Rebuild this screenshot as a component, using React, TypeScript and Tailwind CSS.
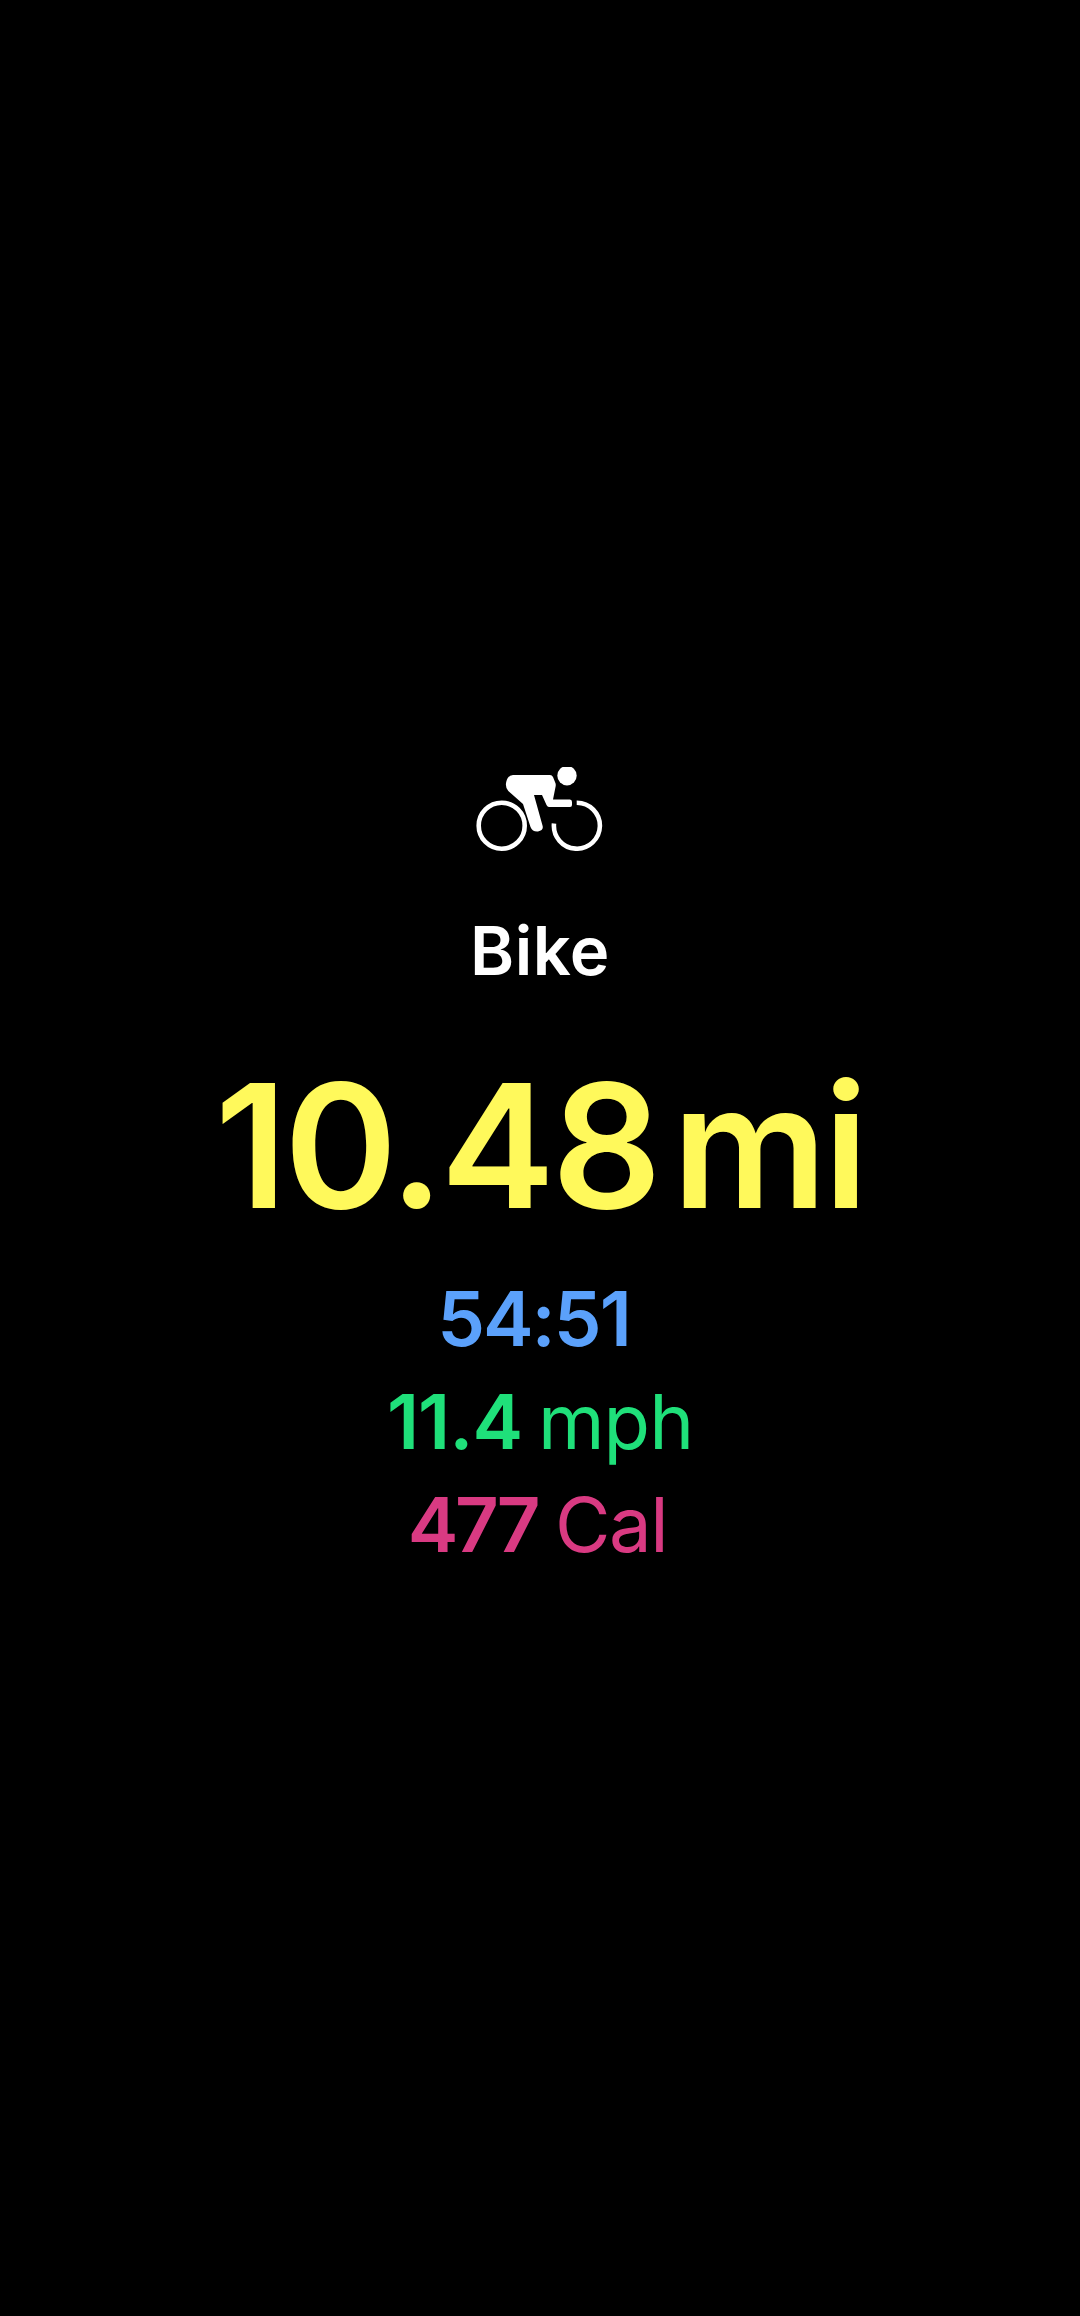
const BikeIcon = () => (
  <svg width="128" height="84" viewBox="0 0 128 84" fill="none" className="mr-[3px]">
    <circle cx="92" cy="8.7" r="9.7" fill="white" />
    <circle cx="26.7" cy="58.7" r="23" stroke="white" strokeWidth="4.6" />
    <path d="M101.7 35.7A23 23 0 1 1 79 56.5" stroke="white" strokeWidth="4.6" />
    <path
      d="M38 8H75Q77 8 78 10L80.5 16.3Q81 18 80.5 20L78 32.5H95Q97 32.5 97 35V38Q97 40 95 40H74Q72.5 40 71.5 38L67 28H59L67.5 58.5Q69 63.5 63 64.5Q57.5 65 55.5 60L48 37L33.3 24Q30 20.5 31.2 15Q33 8 38 8Z"
      fill="white"
    />
  </svg>
)

export default function App() {
  return (
    <div className="min-h-[2316px] pt-[27px] bg-black flex flex-col items-center justify-center font-['Inter',sans-serif]">
      <BikeIcon />
      <h1 className="mt-[60px] text-[67px] leading-[80px] font-semibold text-white tracking-[0.5px]">Bike</h1>
      <p className="mt-[59px] flex gap-[14px] text-[172px] leading-[190px] font-semibold text-[#fff95b] tracking-[-3.5px] whitespace-nowrap">
        <span>10.48</span>
        <span>mi</span>
      </p>
      <p className="mt-[26px] mr-[13px] text-[76px] leading-[104px] font-semibold text-[#5ba1fb] tracking-[-2px]">54:51</p>
      <p className="flex gap-[16px] text-[76px] leading-[103px] text-[#1fe07a] tracking-[-1px]">
        <span className="font-semibold">11.4</span>
        <span>mph</span>
      </p>
      <p className="flex gap-[18px] mr-[5px] text-[76px] leading-[103px] text-[#d93a82] tracking-[-1.5px]">
        <span className="font-semibold tracking-[-3.5px]">477</span>
        <span>Cal</span>
      </p>
    </div>
  )
}
